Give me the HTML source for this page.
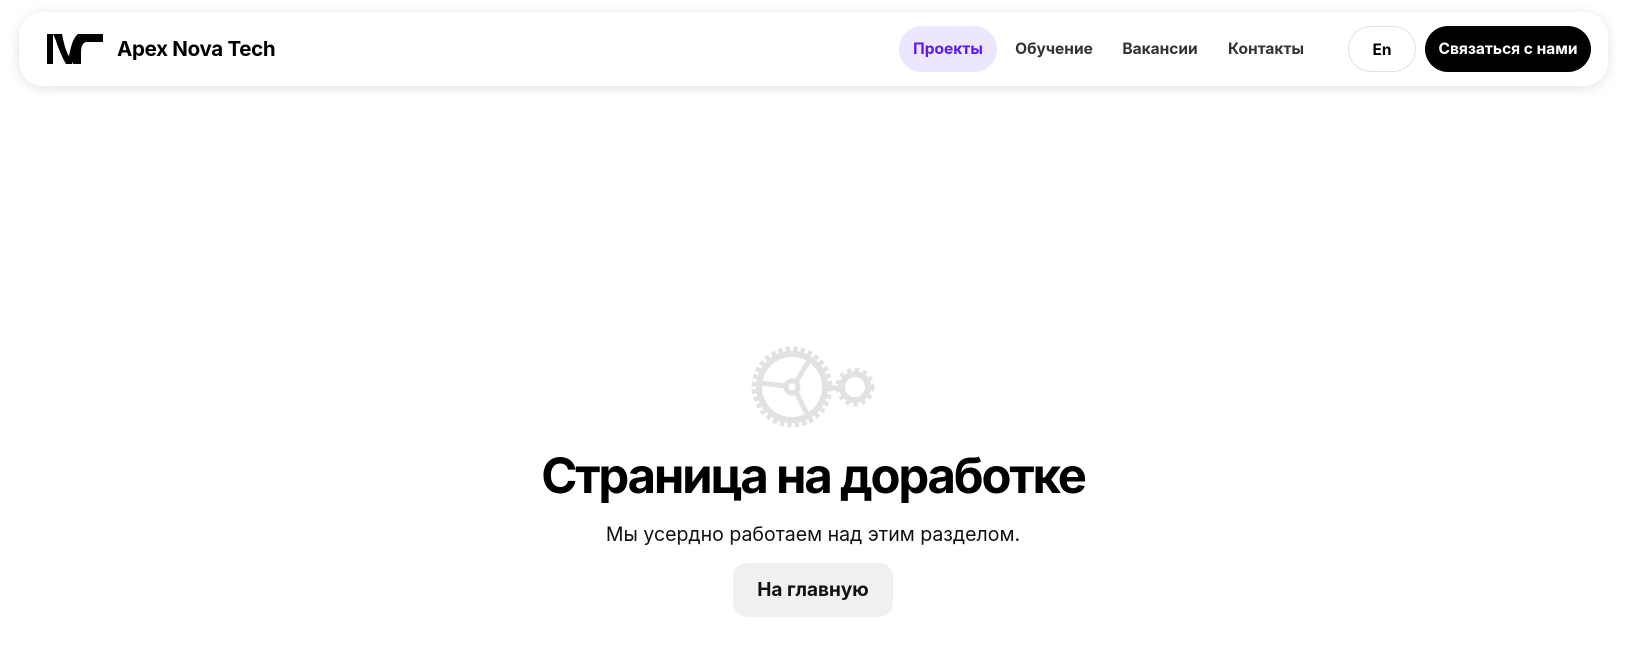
<!DOCTYPE html>
<html><head><meta charset="utf-8"><style>
*{margin:0;padding:0;box-sizing:border-box}
body{width:1642px;height:654px;background:#fff;font-family:"Inter","Liberation Sans",sans-serif;position:relative;overflow:hidden}
.hdr{position:absolute;left:19px;top:12px;width:1589px;height:74px;background:#fff;border-radius:24px;box-shadow:0 2px 12px rgba(0,0,0,.12)}
.logo{position:absolute;left:47px;top:34px}
.brand{position:absolute;left:117px;top:36px;font-size:20.5px;font-weight:700;color:#000;letter-spacing:-0.3px}
.nav{position:absolute;top:26px;height:46px;line-height:46px;font-size:15.5px;font-weight:700;color:#333;text-align:center}
.pill{background:#ece6fe;color:#5b18f5;border-radius:23px}
.en{border:1px solid #e2e2e2;border-radius:23px;color:#000}
.cta{background:#000;color:#fff;border-radius:23px}
h1{position:absolute;left:-8px;width:1642px;top:446px;text-align:center;font-size:49px;font-weight:700;letter-spacing:-2.2px;color:#000}
.sub{position:absolute;left:-8px;width:1642px;top:522px;text-align:center;font-size:19.5px;color:#111}
.btn{position:absolute;left:733px;top:563px;width:160px;height:54px;line-height:54px;border-radius:14px;background:#f0f0f0;text-align:center;font-size:19px;font-weight:700;color:#111}
</style></head><body>
<div class="hdr"></div>
<svg class="logo" width="56" height="30" viewBox="0 0 56 30">
<path d="M0 0H6V30H0Z" fill="#000"/>
<path d="M6 0H15C17 10 19 18 22 22C23 24 24 25 25 26V30H19C16 25 13 18 10 10C9 6 7 2 6 0Z" fill="#000"/>
<path d="M22 22C24 12 26 4 31 0H56V8H40C36 8 34 12 34 18V30H26C25 27 23 25 22 22Z" fill="#000"/>
</svg>
<div class="brand">Apex Nova Tech</div>
<div class="nav pill" style="left:899px;width:98px">Проекты</div>
<div class="nav" style="left:1008px;width:92px">Обучение</div>
<div class="nav" style="left:1116px;width:88px">Вакансии</div>
<div class="nav" style="left:1222px;width:88px">Контакты</div>
<div class="nav en" style="left:1348px;width:68px">En</div>
<div class="nav cta" style="left:1425px;width:166px">Связаться с нами</div>
<svg style="position:absolute;left:745px;top:342px" width="135" height="90" viewBox="0 0 135 90">
<g fill="none" stroke="#e2e2e2">
<circle cx="47" cy="45" r="33" stroke-width="6"/>
<circle cx="47" cy="45" r="37" stroke-width="7" stroke-dasharray="4.3 3"/>
<circle cx="47" cy="45" r="6" stroke-width="5"/>
<path d="M41 44L15 41M51 40L65 17M51 50L62 72" stroke-width="5"/>
<circle cx="110" cy="45" r="13" stroke-width="6"/>
<circle cx="110" cy="45" r="17" stroke-width="5" stroke-dasharray="4 4"/>
<path d="M83 46H95" stroke-width="5"/>
</g></svg>
<h1>Страница на доработке</h1>
<div class="sub">Мы усердно работаем над этим разделом.</div>
<div class="btn">На главную</div>
</body></html>
